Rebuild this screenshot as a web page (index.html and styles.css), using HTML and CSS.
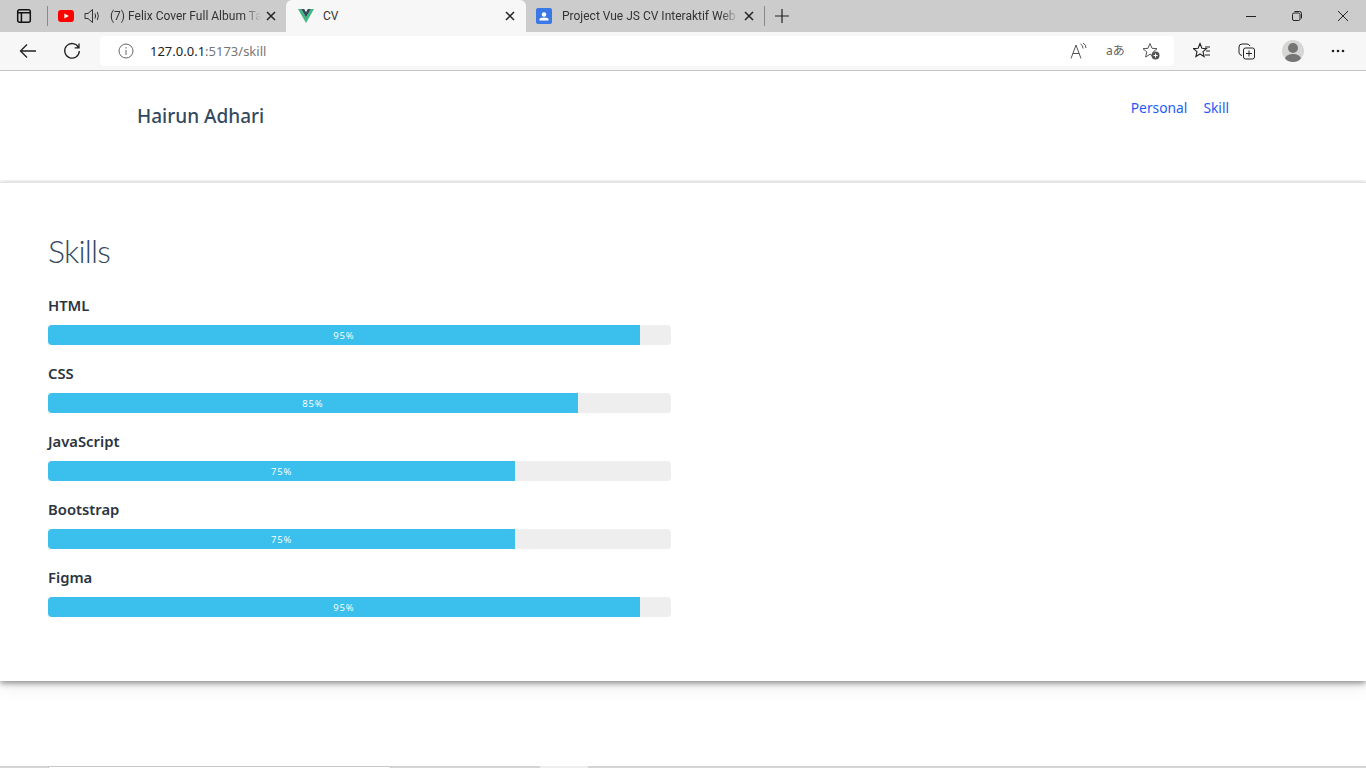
FILE: index.html
```html
<!DOCTYPE html>
<html lang="en">
  <head>
    <title>CV</title>
    <meta charset="UTF-8" />
    <link rel="stylesheet" href="styles.css">
  </head>
  <body>

    <!-- browser chrome -->
    <div class="tabstrip">
      <svg class="tab-actions" width="16" height="16" viewBox="0 0 16 16" fill="none" stroke="#111" stroke-width="1.5"><rect x="1.700" y="1.700" width="12.600" height="12.600" rx="2"/><path d="M1.700 4.800h12.600M5.400 4.800v9.500"/></svg>
      <span class="tab-sep"></span>
      <div class="tab">
        <svg class="favicon" width="16" height="12" viewBox="0 0 16 12"><rect width="16" height="12" rx="3" fill="#f00"/><path d="M6.400 3.400v5.200L10.800 6z" fill="#fff"/></svg>
        <svg class="speaker" width="17" height="16" viewBox="0 0 17 16" fill="none" stroke="#333" stroke-width="1"><path d="M1 5.500h3L8.500 1.500v13L4 10.500H1zM11 5.500q1.200 2.500 0 5M13.300 4q2 4 0 8"/></svg>
        <span class="tab-title">(7) Felix Cover Full Album Ta</span>
        <svg class="tab-close" width="10" height="10" viewBox="0 0 10 10" stroke="#222" stroke-width="1.500"><path d="M1 1l8 8M9 1l-8 8"/></svg>
      </div>
      <div class="tab tab-active">
        <svg class="favicon" width="16" height="14" viewBox="0 0 16 14"><path d="M0 0h3.200L8 8.200 12.800 0H16L8 14z" fill="#41b883"/><path d="M3.200 0h3L8 3.200 9.800 0h3L8 8.200z" fill="#35495e"/></svg>
        <span class="tab-title">CV</span>
        <svg class="tab-close" width="10" height="10" viewBox="0 0 10 10" stroke="#222" stroke-width="1.500"><path d="M1 1l8 8M9 1l-8 8"/></svg>
      </div>
      <div class="tab">
        <svg class="favicon" width="16" height="16" viewBox="0 0 16 16"><rect width="16" height="16" rx="2" fill="#3b78e7"/><circle cx="8" cy="6.500" r="2.200" fill="#fff"/><path d="M3.500 12.500v-1.200q0-1.800 4.500-1.800t4.500 1.800v1.200z" fill="#fff"/></svg>
        <span class="tab-title">Project Vue JS CV Interaktif Web</span>
        <svg class="tab-close" width="10" height="10" viewBox="0 0 10 10" stroke="#222" stroke-width="1.500"><path d="M1 1l8 8M9 1l-8 8"/></svg>
      </div>
      <span class="tab-sep"></span>
      <svg class="new-tab" width="16" height="16" viewBox="0 0 16 16" stroke="#222" stroke-width="1.200"><path d="M8 1v14M1 8h14"/></svg>
      <div class="win-controls">
        <svg width="12" height="12" viewBox="0 0 12 12" stroke="#222"><path d="M1 6.500h10"/></svg>
        <svg width="12" height="12" viewBox="0 0 12 12" fill="none" stroke="#222"><rect x="1.500" y="3" width="7.500" height="7.500" rx="1.500"/><path d="M3.500 1.500h5q2 0 2 2v5"/></svg>
        <svg width="12" height="12" viewBox="0 0 12 12" stroke="#222"><path d="M1 1l10 10M11 1L1 11"/></svg>
      </div>
    </div>

    <div class="toolbar">
      <svg class="nav-btn" width="18" height="18" viewBox="0 0 18 18" fill="none" stroke="#222" stroke-width="1.300"><path d="M17 9H1.500M8 2.500L1.500 9 8 15.500"/></svg>
      <svg class="nav-btn" width="18" height="18" viewBox="0 0 18 18" fill="none" stroke="#222" stroke-width="1.300"><path d="M15.500 5.500A7.300 7.300 0 1 0 16.300 9M16 1.500v4.300h-4.300"/></svg>
      <div class="addressbar">
        <svg width="16" height="16" viewBox="0 0 16 16" fill="none" stroke="#666"><circle cx="8" cy="8" r="7"/><path d="M8 7v5M8 4v1.500"/></svg>
        <span class="url"><span class="url-host">127.0.0.1</span>:5173/skill</span>
        <div class="address-icons">
          <svg width="18" height="16" viewBox="0 0 18 16" fill="none" stroke="#555"><path d="M1 15.500L6 2l5 13.500M2.800 10.500h6.400M10.500 1q2.500 1 2.500 4.500M13 0q3 1.500 3 5"/></svg>
          <span class="translate-glyph">aあ</span>
          <svg width="18" height="18" viewBox="0 0 18 18" fill="none" stroke="#555"><path d="M8 1.500l2 4.800 5 .4-3.800 3.300L12.400 15 8 12.300 3.600 15l1.200-5L1 6.700l5-.4z"/><circle cx="13.500" cy="13.500" r="4" fill="#555" stroke="none"/><path d="M13.500 11.500v4M11.500 13.500h4" stroke="#fff"/></svg>
        </div>
      </div>
      <div class="toolbar-icons">
        <svg width="18" height="18" viewBox="0 0 18 18" fill="none" stroke="#222" stroke-width="1.100"><path d="M7 1.500l1.900 4.700 4.600.4-3.500 3 1.100 4.900L7 12l-4.100 2.500L4 9.600l-3.500-3 4.600-.4zM12 5h5M13 9h4M12 13h5"/></svg>
        <svg width="18" height="18" viewBox="0 0 18 18" fill="none" stroke="#222"><path d="M4 13.500Q1.500 13 1 11L1 5q0-3 3-3h5q2 0 3 2"/><rect x="5.500" y="6" width="11" height="11" rx="2"/><path d="M11 8.500v6M8 11.500h6"/></svg>
        <div class="avatar"><span class="avatar-head"></span><span class="avatar-body"></span></div>
        <svg width="14" height="4" viewBox="0 0 14 4" fill="#222"><circle cx="2" cy="2" r="1.300"/><circle cx="7" cy="2" r="1.300"/><circle cx="12" cy="2" r="1.300"/></svg>
      </div>
    </div>

    <!-- page -->
    <div class="page">
      <header class="site-header">
        <span class="brand">Hairun Adhari</span>
        <nav class="site-nav">
          <a href="#">Personal</a>
          <a href="#">Skill</a>
        </nav>
      </header>

      <main class="card">
        <h1>Skills</h1>
        <div class="skill-list">
          <div class="skill">
            <h2>HTML</h2>
            <div class="progress"><div class="progress-bar" style="width: 95%">95%</div></div>
          </div>
          <div class="skill">
            <h2>CSS</h2>
            <div class="progress"><div class="progress-bar" style="width: 85%">85%</div></div>
          </div>
          <div class="skill">
            <h2>JavaScript</h2>
            <div class="progress"><div class="progress-bar" style="width: 75%">75%</div></div>
          </div>
          <div class="skill">
            <h2>Bootstrap</h2>
            <div class="progress"><div class="progress-bar" style="width: 75%">75%</div></div>
          </div>
          <div class="skill">
            <h2>Figma</h2>
            <div class="progress"><div class="progress-bar" style="width: 95%">95%</div></div>
          </div>
        </div>
      </main>
    </div>

    <div class="bottom-edge">
      <span class="edge-a"></span>
      <span class="edge-b"></span>
      <span class="edge-a edge-c"></span>
      <span class="edge-d"></span>
      <span class="edge-a edge-e"></span>
    </div>

  </body>
</html>
```

FILE: styles.css
```css
html, body {
  margin: 0;
  padding: 0;
  height: 100%;
  overflow: hidden;
}
body {
  display: flex;
  flex-direction: column;
  background-color: white;
  font-family: "Open Sans", "Noto Sans", sans-serif;
  color: #212529;
}

/* browser chrome */
.tabstrip {
  height: 32px;
  flex: none;
  display: flex;
  align-items: center;
  background-color: #cccccc;
  padding-left: 16px;
}
.tab-actions {
  margin-right: 15px;
}
.tab-sep {
  width: 1px;
  height: 20px;
  background-color: #8a8a8a;
  flex: none;
}
.tab {
  width: 238px;
  height: 32px;
  box-sizing: border-box;
  flex: none;
  display: flex;
  align-items: center;
  padding: 0 10px;
  font-size: 12px;
  font-family: Roboto, sans-serif;
  color: #333;
}
.tab-active {
  width: 240px;
  padding: 0 11px 0 12px;
  background-color: #f7f7f7;
  border-radius: 6px 6px 0 0;
}
.favicon {
  flex: none;
  margin-right: 10px;
}
.tab-active .favicon {
  margin-right: 9px;
}
.speaker {
  flex: none;
  margin-right: 9px;
}
.tab-title {
  flex: 1;
  white-space: nowrap;
  overflow: hidden;
  -webkit-mask-image: linear-gradient(to left, transparent 0, black 18px);
  mask-image: linear-gradient(to left, transparent 0, black 18px);
}
.tab-active .tab-title {
  -webkit-mask-image: none;
  mask-image: none;
}
.tab-close {
  flex: none;
  margin-left: 5px;
}
.new-tab {
  margin-left: 9px;
}
.win-controls {
  margin-left: auto;
  display: flex;
  align-items: center;
  gap: 34px;
  padding-right: 17px;
}
.toolbar {
  height: 39px;
  flex: none;
  box-sizing: border-box;
  display: flex;
  align-items: center;
  background-color: #f7f7f7;
  padding: 0 21px 0 19px;
  border-bottom: 1px solid #c4c4c4;
}
.nav-btn {
  margin-right: 26px;
  flex: none;
}
.addressbar {
  width: 1074px;
  height: 30px;
  margin-left: -7px;
  box-sizing: border-box;
  flex: none;
  display: flex;
  align-items: center;
  background-color: white;
  border-radius: 4px;
  padding: 0 14px 0 18px;
  font-size: 13px;
  font-family: "Noto Sans", sans-serif;
  color: #767676;
}
.url {
  margin-left: 16px;
}
.url-host {
  color: #222;
}
.address-icons {
  margin-left: auto;
  display: flex;
  align-items: center;
  gap: 18px;
}
.translate-glyph {
  width: 18px;
  font-size: 12px;
  line-height: 16px;
  white-space: nowrap;
  color: #666;
  font-family: "Noto Sans", "Noto Sans CJK JP", sans-serif;
}
.toolbar-icons {
  margin-left: 19px;
  flex: 1;
  display: flex;
  align-items: center;
  justify-content: space-between;
}
.avatar {
  width: 22px;
  height: 22px;
  border-radius: 50%;
  background-color: #d6d6d4;
  overflow: hidden;
  display: flex;
  flex-direction: column;
  align-items: center;
}
.avatar-head {
  width: 10px;
  height: 10px;
  margin-top: 3px;
  border-radius: 50%;
  background-color: #757575;
  flex: none;
}
.avatar-body {
  width: 16px;
  height: 10px;
  margin-top: 1px;
  border-radius: 50%;
  background-color: #757575;
  flex: none;
}

/* page */
.page {
  flex: 1;
  min-height: 0;
}
.site-header {
  height: 111px;
  box-sizing: border-box;
  display: flex;
  justify-content: space-between;
  padding: 25px 137px 0 137px;
}
.brand {
  font-size: 19px;
  font-weight: 500;
  line-height: 40px;
  color: #34495e;
  font-family: "Noto Sans", sans-serif;
}
.site-nav {
  display: flex;
  gap: 16px;
  font-size: 13.800px;
  line-height: 24px;
  font-family: "Noto Sans", sans-serif;
}
.site-nav a {
  color: #1f5cf5;
  text-decoration: none;
}
.card {
  height: 499px;
  box-sizing: border-box;
  border-top: 1px solid #e4e4e4;
  padding: 48px 48px 0 48px;
  box-shadow: 0 2px 6px rgba(0, 0, 0, 0.45), 0 8px 16px rgba(0, 0, 0, 0.06);
  background-color: white;
  clip-path: inset(-2px 0 -30px 0);
}
h1 {
  margin: 0 0 24px 0;
  font-size: 32px;
  font-weight: 300;
  line-height: 40px;
  letter-spacing: -0.8px;
  color: #34495e;
  font-family: Lato, sans-serif;
}
.skill-list {
  width: 623px;
  display: flex;
  flex-direction: column;
  gap: 18px;
}
h2 {
  margin: 0 0 10px 0;
  font-size: 14.800px;
  font-weight: 600;
  line-height: 20px;
  color: #2c3540;
  font-family: "Noto Sans", sans-serif;
}
.progress {
  height: 20px;
  border-radius: 4px;
  background-color: #eeeeee;
  overflow: hidden;
}
.progress-bar {
  height: 100%;
  background-color: #3bbfed;
  color: white;
  font-size: 9.500px;
  line-height: 22px;
  letter-spacing: 0.8px;
  text-align: center;
}

/* sliver of the next section at the bottom edge */
.bottom-edge {
  height: 2px;
  flex: none;
  display: flex;
}
.edge-a {
  width: 48px;
  background-color: #d4d4d4;
}
.edge-b {
  width: 343px;
  background-color: white;
  border: 1px solid #c8c8c8;
  border-bottom: none;
  box-sizing: border-box;
}
.edge-c {
  width: 149px;
}
.edge-d {
  width: 48px;
  background-color: #eeeeee;
}
.edge-e {
  flex: 1;
}
```
